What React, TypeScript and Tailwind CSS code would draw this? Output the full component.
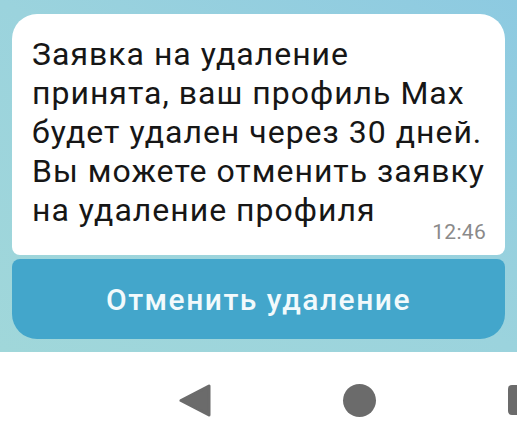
export default function App() {
  return (
    <div className="w-[517px] h-[448px] overflow-hidden bg-white" style={{ fontFamily: 'Roboto, "Noto Sans", sans-serif' }}>
      <div className="h-[352px] px-3 pt-[14px] bg-gradient-to-tr from-[#a0d7da] via-[#9bd3dd] to-[#8dcae1]">
        <div className="h-[241px] bg-white rounded-t-[25px] rounded-b-[8px] pl-[20px] pr-[19px] pt-[21px]">
          <p className="text-[32px] leading-[39px] text-[#161616] tracking-[1px] whitespace-nowrap">
            Заявка на удаление
            <br />
            принята, ваш профиль Max
            <br />
            будет удален через 30 дней.
            <br />
            Вы можете отменить заявку
          </p>
          <div className="flex items-end justify-between">
            <span className="text-[32px] leading-[39px] text-[#161616] tracking-[1px] whitespace-nowrap">на удаление профиля</span>
            <span className="text-[21px] leading-[21px] text-[#8a8a8a] tracking-[0.3px] mb-[-13px]">12:46</span>
          </div>
        </div>
        <button className="mt-1 w-full h-[80px] bg-[#43a6cb] rounded-t-[8px] rounded-b-[25px] text-[#f2fafc] text-[30px] font-medium tracking-[1.5px]">
          Отменить удаление
        </button>
      </div>
      <div className="h-[96px] flex items-center pl-[178px] gap-[132px]">
        <svg className="w-[33px] h-[33px] shrink-0" viewBox="0 0 33 33">
          <polygon points="31,2 31,31 3,16.5" fill="#6b6b6b" stroke="#6b6b6b" strokeWidth="3" strokeLinejoin="round" />
        </svg>
        <div className="w-[33px] h-[33px] shrink-0 rounded-full bg-[#6b6b6b]" />
        <div className="w-[30px] h-[30px] shrink-0 rounded-[4px] bg-[#6b6b6b]" />
      </div>
    </div>
  );
}
